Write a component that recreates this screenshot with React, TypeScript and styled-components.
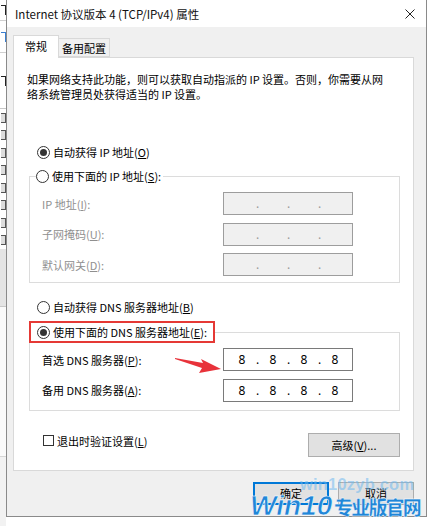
import React from "react";
import styled, { createGlobalStyle } from "styled-components";

const GlobalStyle = createGlobalStyle`
  html, body {
    margin: 0;
    padding: 0;
    background: #fff;
  }
  body {
    font-family: "Noto Sans CJK SC", "Noto Sans", sans-serif;
    font-size: 11px;
    color: #000;
  }
`;

const sideBands = [
  { h: 20, bg: "#fff", mark: "#222" },
  { h: 1, bg: "#d0d0d0" },
  { h: 31, bg: "#fff", mark: "#3b7fd0" },
  { h: 1, bg: "#d0d0d0" },
  { h: 55, bg: "#fff", mark: "#222" },
  { h: 1, bg: "#c8c8c8" },
  { h: 140, bg: "#fff", icons: 8 },
  { h: 57, bg: "#e4e4e4" },
  { h: 1, bg: "#c8c8c8" },
  { h: 149, bg: "#fafafa" },
  { h: 1, bg: "#d6d6d6" },
  { h: 69, bg: "#f2f2f2" },
];

const App = () => {
  return (
    <Page>
      <GlobalStyle />
      <Side>
        {sideBands.map((b, i) => (
          <Band key={i} $h={b.h} $bg={b.bg}>
            {b.mark && <Mark $color={b.mark} />}
            {b.icons &&
              Array.from({ length: b.icons }).map((_, j) => <SideIcon key={j} />)}
          </Band>
        ))}
      </Side>

      <Dialog>
        <TitleBar>
          <Title>Internet 协议版本 4 (TCP/IPv4) 属性</Title>
          <svg width="10" height="10" viewBox="0 0 10 10">
            <path d="M0.5 0.5 L9.5 9.5 M9.5 0.5 L0.5 9.5" stroke="#222" strokeWidth="1" />
          </svg>
        </TitleBar>

        <Body>
          <TabRow>
            <Tab $active>常规</Tab>
            <Tab>备用配置</Tab>
          </TabRow>

          <Panel>
            <Intro>
              如果网络支持此功能，则可以获取自动指派的 IP 设置。否则，你需要从网
              <br />
              络系统管理员处获得适当的 IP 设置。
            </Intro>

            <RadioRow $top={42}>
              <Radio $checked />
              <span>
                自动获得 IP 地址(<u>O</u>)
              </span>
            </RadioRow>

            <Group $top={8}>
              <IpLegend>
                <Radio />
                <span>
                  使用下面的 IP 地址(<u>S</u>):
                </span>
              </IpLegend>
              <Rows $pt={8} $pb={6}>
                <FieldRow>
                  <FieldLabel $disabled>
                    IP 地址(<u>I</u>):
                  </FieldLabel>
                  <IpBox $disabled>
                    <IpValue values={["", "", "", ""]} disabled />
                  </IpBox>
                </FieldRow>
                <FieldRow>
                  <FieldLabel $disabled>
                    子网掩码(<u>U</u>):
                  </FieldLabel>
                  <IpBox $disabled>
                    <IpValue values={["", "", "", ""]} disabled />
                  </IpBox>
                </FieldRow>
                <FieldRow>
                  <FieldLabel $disabled>
                    默认网关(<u>D</u>):
                  </FieldLabel>
                  <IpBox $disabled>
                    <IpValue values={["", "", "", ""]} disabled />
                  </IpBox>
                </FieldRow>
              </Rows>
            </Group>

            <RadioRow $top={16}>
              <Radio />
              <span>
                自动获得 DNS 服务器地址(<u>B</u>)
              </span>
            </RadioRow>

            <Group $top={6}>
              <DnsLegend>
                <Radio $checked />
                <span>
                  使用下面的 DNS 服务器地址(<u>E</u>):
                </span>
              </DnsLegend>
              <Rows $pt={5} $pb={8}>
                <FieldRow>
                  <FieldLabel>
                    首选 DNS 服务器(<u>P</u>):
                  </FieldLabel>
                  <IpBox>
                    <IpValue values={["8", "8", "8", "8"]} />
                  </IpBox>
                </FieldRow>
                <FieldRow>
                  <FieldLabel>
                    备用 DNS 服务器(<u>A</u>):
                  </FieldLabel>
                  <IpBox>
                    <IpValue values={["8", "8", "8", "8"]} />
                  </IpBox>
                </FieldRow>
              </Rows>
            </Group>

            <FooterRow>
              <CheckRow>
                <CheckBox />
                <span>
                  退出时验证设置(<u>L</u>)
                </span>
              </CheckRow>
              <Button $w={92} $h={24}>
                高级(<u>V</u>)...
              </Button>
            </FooterRow>
          </Panel>

          <ButtonBar>
            <Button $w={76} $h={23} $default>
              确定
            </Button>
            <Button $w={76} $h={23}>
              取消
            </Button>
          </ButtonBar>
        </Body>
      </Dialog>

      <Arrow width="50" height="22" viewBox="0 0 50 22">
        <polygon points="0,5 28,10 26,6 46,16 24,20 27,15 0,6" fill="#e8323a" />
      </Arrow>

      <SiteUrl>win10zyb.com</SiteUrl>
      <BrandLatin>Win10</BrandLatin>
      <BrandCjk>专业版官网</BrandCjk>
    </Page>
  );
};

const IpValue = ({ values, disabled }: { values: string[]; disabled?: boolean }) => (
  <>
    {values.map((v, i) => (
      <React.Fragment key={i}>
        <Seg>{v}</Seg>
        {i < 3 && <Dot $disabled={disabled}>.</Dot>}
      </React.Fragment>
    ))}
  </>
);

export default App;

const Page = styled.div`
  position: relative;
  width: 428px;
  height: 526px;
  display: flex;
  overflow: hidden;
  background: #fff;
`;

const Side = styled.div`
  width: 6px;
  flex: none;
  display: flex;
  flex-direction: column;
`;

const Band = styled.div<{ $h: number; $bg: string }>`
  height: ${(p) => p.$h}px;
  background: ${(p) => p.$bg};
  display: flex;
  flex-direction: column;
  justify-content: space-around;
  align-items: flex-start;
`;

const Mark = styled.div<{ $color: string }>`
  width: 4px;
  height: 9px;
  margin-left: 1px;
  border-right: 1px solid ${(p) => p.$color};
  border-top: 1px solid ${(p) => p.$color};
`;

const SideIcon = styled.div`
  width: 4px;
  height: 8px;
  margin-left: 1px;
  border: 1px solid #555;
  border-left: none;
  background: #ddd;
`;

const Dialog = styled.div`
  width: 421px;
  height: 517px;
  flex: none;
  box-sizing: border-box;
  border: 1px solid #8a8a8a;
  border-top: none;
  background: #f0f0f0;
  display: flex;
  flex-direction: column;
`;

const TitleBar = styled.div`
  height: 27px;
  flex: none;
  background: #fff;
  display: flex;
  align-items: center;
  justify-content: space-between;
  padding: 0 11px 0 8px;
`;

const Title = styled.div`
  font-size: 11.5px;
  color: #111;
`;

const Body = styled.div`
  padding: 8px 0 0 6px;
  display: flex;
  flex-direction: column;
`;

const TabRow = styled.div`
  display: flex;
  align-items: flex-end;
  height: 22px;
`;

const Tab = styled.div<{ $active?: boolean }>`
  position: relative;
  z-index: 1;
  box-sizing: border-box;
  height: ${(p) => (p.$active ? 23 : 19)}px;
  width: ${(p) => (p.$active ? 46 : 51)}px;
  margin-bottom: ${(p) => (p.$active ? -1 : 0)}px;
  background: ${(p) => (p.$active ? "#fff" : "#f0f0f0")};
  border: 1px solid #d9d9d9;
  border-bottom: ${(p) => (p.$active ? "none" : "1px solid #d9d9d9")};
  border-left: ${(p) => (p.$active ? "1px solid #d9d9d9" : "none")};
  display: flex;
  align-items: center;
  justify-content: center;
  padding-bottom: ${(p) => (p.$active ? 2 : 0)}px;
`;

const Panel = styled.div`
  width: 401px;
  box-sizing: border-box;
  background: #fff;
  border: 1px solid #d9d9d9;
  padding: 14px 0 13px 0;
  display: flex;
  flex-direction: column;
`;

const Intro = styled.p`
  margin: 0 0 0 13px;
  line-height: 15px;
  white-space: nowrap;
`;

const RadioRow = styled.div<{ $top: number }>`
  display: flex;
  align-items: center;
  gap: 3px;
  height: 16px;
  margin: ${(p) => p.$top}px 0 0 23px;
`;

const Radio = styled.span<{ $checked?: boolean }>`
  flex: none;
  width: 13px;
  height: 13px;
  box-sizing: border-box;
  border-radius: 50%;
  border: 1px solid #333;
  background: #fff;
  display: inline-flex;
  align-items: center;
  justify-content: center;

  &::after {
    content: "";
    width: 7px;
    height: 7px;
    border-radius: 50%;
    background: ${(p) => (p.$checked ? "#333" : "transparent")};
  }
`;

const Group = styled.fieldset<{ $top: number }>`
  margin: ${(p) => p.$top}px 0 0 15px;
  padding: 0;
  width: 371px;
  min-width: 0;
  box-sizing: border-box;
  border: 1px solid #dcdcdc;
`;

const IpLegend = styled.legend`
  display: flex;
  align-items: center;
  gap: 3px;
  height: 16px;
  padding: 0 2px 0 0;
  margin-left: 6px;
  background: #fff;
`;

const DnsLegend = styled.legend`
  display: flex;
  align-items: center;
  gap: 3px;
  height: 22px;
  box-sizing: border-box;
  padding: 0 6px;
  margin-left: -1px;
  border: 2px solid #e53935;
  background: #fff;
`;

const Rows = styled.div<{ $pt: number; $pb: number }>`
  display: flex;
  flex-direction: column;
  gap: 7.5px;
  padding: ${(p) => p.$pt}px 0 ${(p) => p.$pb}px 12px;
`;

const FieldRow = styled.div`
  display: flex;
  align-items: center;
  height: 23px;
`;

const FieldLabel = styled.div<{ $disabled?: boolean }>`
  width: 181px;
  color: ${(p) => (p.$disabled ? "#8f8f8f" : "#000")};
`;

const IpBox = styled.div<{ $disabled?: boolean }>`
  width: 130px;
  height: 23px;
  box-sizing: border-box;
  border: 1px solid ${(p) => (p.$disabled ? "#9d9d9d" : "#7a7a7a")};
  background: ${(p) => (p.$disabled ? "#f0f0f0" : "#fff")};
  display: flex;
  align-items: center;
  padding-left: 6px;
  font-family: "Noto Sans", "DejaVu Sans", sans-serif;
  font-size: 12px;
`;

const Seg = styled.span`
  width: 24px;
  text-align: center;
`;

const Dot = styled.span<{ $disabled?: boolean }>`
  width: 7px;
  text-align: center;
  color: ${(p) => (p.$disabled ? "#9a9a9a" : "#000")};
`;

const FooterRow = styled.div`
  display: flex;
  justify-content: space-between;
  align-items: flex-start;
  margin: 22px 13px 0 29px;
`;

const CheckRow = styled.div`
  display: flex;
  align-items: center;
  gap: 3px;
  height: 16px;
`;

const CheckBox = styled.span`
  width: 11px;
  height: 11px;
  box-sizing: border-box;
  border: 1px solid #333;
  background: #fff;
`;

const Button = styled.button<{ $w: number; $h: number; $default?: boolean }>`
  width: ${(p) => p.$w}px;
  height: ${(p) => p.$h}px;
  box-sizing: border-box;
  padding: 0;
  font: inherit;
  color: #000;
  background: #e1e1e1;
  border: ${(p) => (p.$default ? "2px solid #0078d7" : "1px solid #adadad")};
`;

const ButtonBar = styled.div`
  display: flex;
  justify-content: flex-end;
  gap: 9px;
  padding-right: 12px;
  margin-top: 11px;
`;

const Arrow = styled.svg`
  position: absolute;
  left: 175px;
  top: 353px;
`;

const SiteUrl = styled.div`
  position: absolute;
  left: 300px;
  top: 475px;
  font-family: "Liberation Sans", Arial, sans-serif;
  font-weight: bold;
  font-size: 16.5px;
  color: rgba(110, 185, 240, 0.55);
  letter-spacing: 0.2px;
`;

const BrandLatin = styled.div`
  position: absolute;
  left: 250px;
  top: 490px;
  font-family: "Liberation Sans", Arial, sans-serif;
  font-weight: bold;
  font-style: italic;
  font-size: 28px;
  line-height: 32px;
  color: #2186d8;
  -webkit-text-stroke: 0.6px #fff;
`;

const BrandCjk = styled.div`
  position: absolute;
  left: 334px;
  top: 494px;
  font-family: "Noto Sans CJK SC", sans-serif;
  font-weight: 900;
  font-size: 19px;
  line-height: 26px;
  letter-spacing: -1.8px;
  color: #2186d8;
  -webkit-text-stroke: 0.4px #fff;
`;
